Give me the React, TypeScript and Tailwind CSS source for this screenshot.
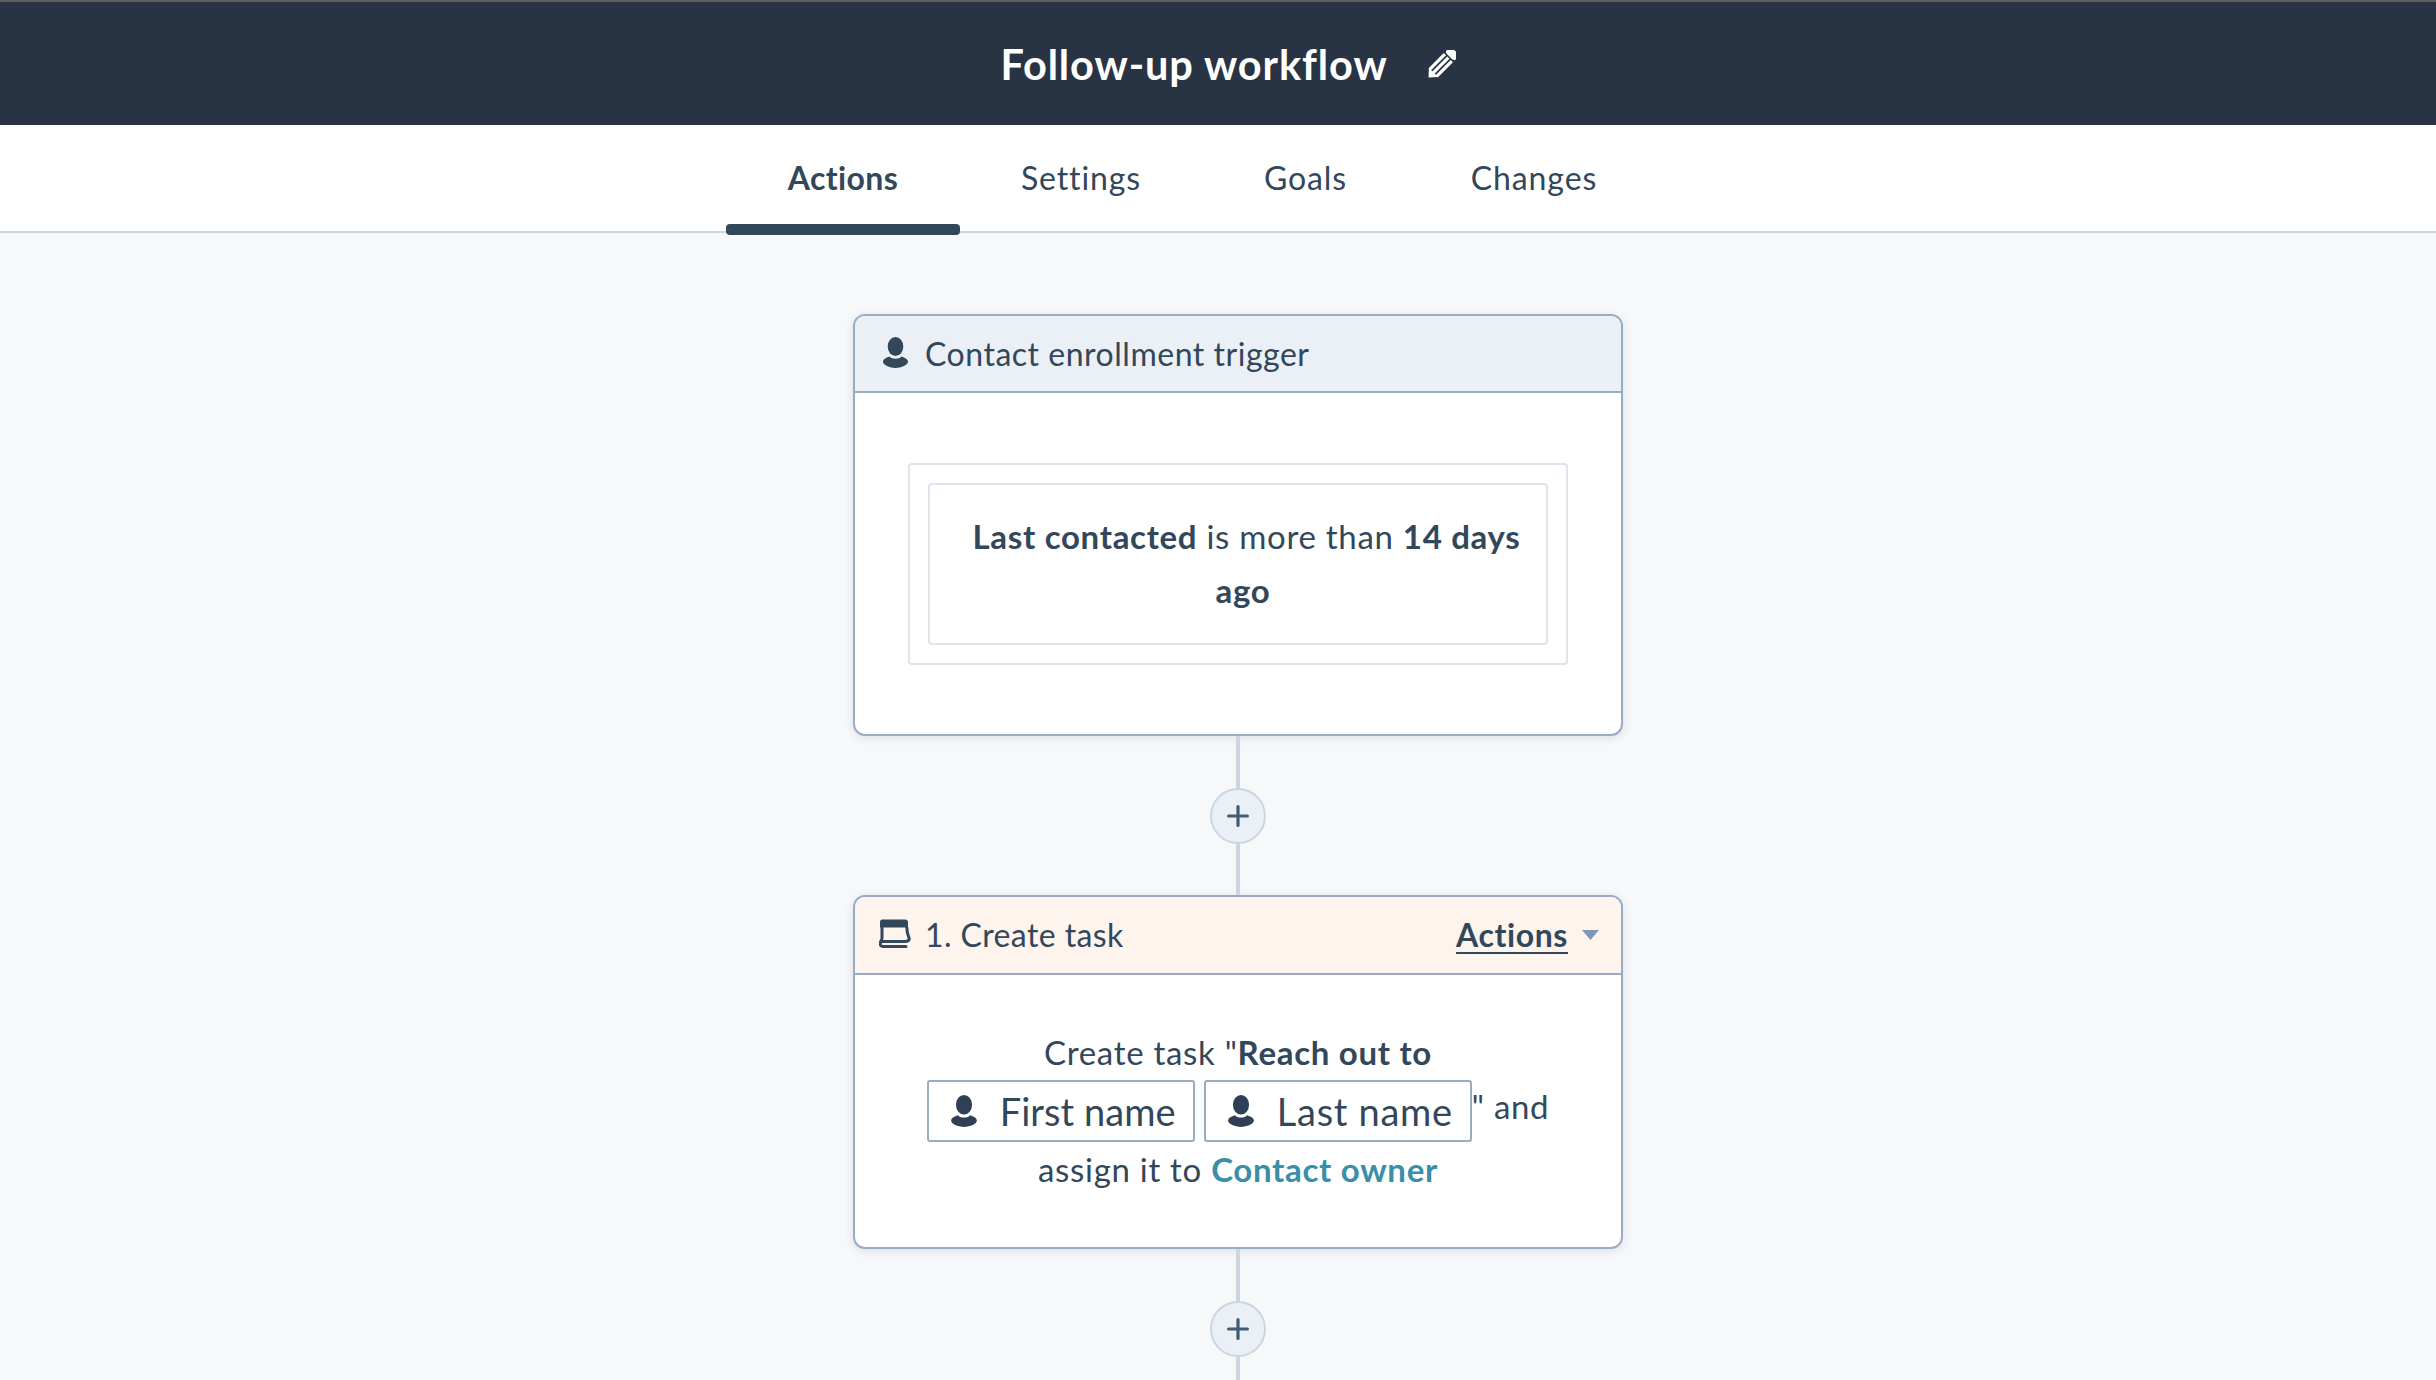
const FONT = "font-['Lato','Noto_Sans',sans-serif]";

function PersonIcon({ className }: { className: string }) {
  return (
    <svg className={className} viewBox="0 0 25 31" fill="currentColor">
      <ellipse cx="12.5" cy="9.5" rx="7.8" ry="9.5" />
      <path d="M6.6 19.6C8.6 22.6 16.4 22.6 18.4 19.6C21.5 20.6 25 22.2 25 24.8C25 28 18.4 31 12.5 31C6.6 31 0 28 0 24.8C0 22.2 3.5 20.6 6.6 19.6Z" />
    </svg>
  );
}

function PencilIcon() {
  return (
    <svg className="w-[28px] h-[28px] text-white" viewBox="0 0 28 28" fill="currentColor">
      <g transform="rotate(45 14 14)">
        <rect x="7.5" y="-4.5" width="13" height="8" rx="3" />
        <rect x="7.5" y="5" width="3.2" height="21.5" />
        <rect x="12.4" y="5" width="3.2" height="21.5" />
        <rect x="17.3" y="5" width="3.2" height="21.5" />
        <path d="M7.5 26H20.5L14 33Z" />
      </g>
    </svg>
  );
}

function TaskIcon() {
  return (
    <svg className="w-[32px] h-[29px] text-[#33475b] -mt-[3px]" viewBox="0 0 32 29" fill="none" stroke="currentColor">
      <path d="M3 0.5H26C28 0.5 29 1.5 29 3.5V8.5H1V3C1 1.5 1.8 0.5 3 0.5Z" fill="currentColor" stroke="none" />
      <path d="M3 8V19C3 20.5 2.6 21.5 1.6 22.5H26C29 22.5 30.8 21 30 19C28.6 15.5 27.8 12 27.8 8" strokeWidth="3" strokeLinejoin="round" />
      <path d="M1.5 24C1 26.5 2 27.5 4 27.5H27" strokeWidth="3" strokeLinecap="round" />
    </svg>
  );
}

function AddStep({ topClass }: { topClass: string }) {
  return (
    <div className="flex flex-col items-center">
      <div className={`w-[4px] bg-[#cbd6e2] ${topClass}`} />
      <div className="w-[56px] h-[56px] rounded-full bg-[#eaf0f6] border-2 border-[#cbd6e2] flex items-center justify-center">
        <svg className="w-[22px] h-[22px]" viewBox="0 0 22 22" stroke="#425b76" strokeWidth="3.2" strokeLinecap="round">
          <path d="M11 1.6V20.4M1.6 11H20.4" />
        </svg>
      </div>
      <div className="w-[4px] h-[51px] bg-[#cbd6e2]" />
    </div>
  );
}

function Token({ label, trackingClass }: { label: string; trackingClass: string }) {
  return (
    <span className={`inline-flex items-center align-middle h-[62px] w-[268px] border-2 border-[#99acc2] rounded-[3px] bg-white text-[38px] leading-none pl-[22px] gap-[23px] ${trackingClass}`}>
      <PersonIcon className="w-[26px] h-[32px] text-[#2f3f55]" />
      {label}
    </span>
  );
}

function Tab({ label, active, className }: { label: string; active?: boolean; className: string }) {
  return (
    <div className={`relative h-full flex items-center justify-center ${className} ${active ? "font-bold tracking-[0.4px]" : ""}`}>
      {label}
      {active && <div className="absolute left-0 right-0 bottom-[-4px] h-[11px] rounded-[4px] bg-[#33475b]" />}
    </div>
  );
}

export default function App() {
  return (
    <div className={`w-[2436px] h-[1380px] overflow-hidden bg-[#f6f8fa] text-[#33475b] ${FONT}`}>
      <header className="h-[125px] border-t-2 border-[#5f5f5f] bg-[#283443] flex items-center justify-center pl-[20px] gap-[40px]">
        <h1 className="text-[41.5px] leading-none font-bold text-white tracking-[0.9px] pt-[2px]">Follow-up workflow</h1>
        <PencilIcon />
      </header>

      <nav className="h-[108px] bg-white border-b-2 border-[#cbd6e2] flex pl-[726px] text-[32px] tracking-[0.9px]">
        <Tab label="Actions" active className="w-[234px]" />
        <Tab label="Settings" className="w-[242px]" />
        <Tab label="Goals" className="w-[207px]" />
        <Tab label="Changes" className="w-[250px]" />
      </nav>

      <main className="ml-[853px] w-[770px] pt-[81px]">
        <section className="rounded-[12px] border-2 border-[#99acc2] bg-white overflow-hidden shadow-[0_2px_10px_rgba(45,62,80,0.12)]">
          <div className="h-[77px] bg-[#eaf0f6] border-b-2 border-[#99acc2] flex items-center pl-[28px] gap-[17px] text-[32px] tracking-[0.52px]">
            <PersonIcon className="w-[25px] h-[31px] text-[#33475b] -mt-[3px]" />
            Contact enrollment trigger
          </div>
          <div className="px-[53px] pt-[70px] pb-[69px]">
            <div className="border-2 border-[#dfe3eb] rounded-[4px] p-[18px]">
              <div className="border-2 border-[#dfe3eb] rounded-[4px] pt-[24px] pb-[26px] pl-[30px] pr-[20px] text-center text-[33px] leading-[54px] tracking-[0.7px]">
                <span className="block pl-[7px]">
                  <b>Last contacted</b> is more than <b>14 days</b>
                </span>
                <b>ago</b>
              </div>
            </div>
          </div>
        </section>

        <AddStep topClass="h-[52px]" />

        <section className="rounded-[12px] border-2 border-[#99acc2] bg-white overflow-hidden shadow-[0_2px_10px_rgba(45,62,80,0.12)]">
          <div className="h-[78px] bg-[#fdf4ee] border-b-2 border-[#99acc2] flex items-center justify-between pl-[24px] pr-[22px] text-[32px] tracking-[0.4px]">
            <div className="flex items-center gap-[14px]">
              <TaskIcon />
              1. Create task
            </div>
            <div className="flex items-center gap-[14px]">
              <span className="font-bold tracking-[0.6px] underline decoration-2 underline-offset-[5px]">Actions</span>
              <svg className="w-[17px] h-[10px]" viewBox="0 0 17 10" fill="#7c98b6">
                <path d="M0 0H17L8.5 10Z" />
              </svg>
            </div>
          </div>
          <div className="px-[66px] pt-[50px] pb-[51px] text-center text-[33px] leading-[54px] tracking-[0.7px]">
            Create task "<b>Reach out to</b> <Token label="First name" trackingClass="tracking-[0.05px]" />{" "}
            <Token label="Last name" trackingClass="tracking-[0.7px]" />" and assign it to{" "}
            <b className="text-[#3a8ea8]">Contact owner</b>
          </div>
        </section>

        <AddStep topClass="h-[52px]" />
      </main>
    </div>
  );
}
